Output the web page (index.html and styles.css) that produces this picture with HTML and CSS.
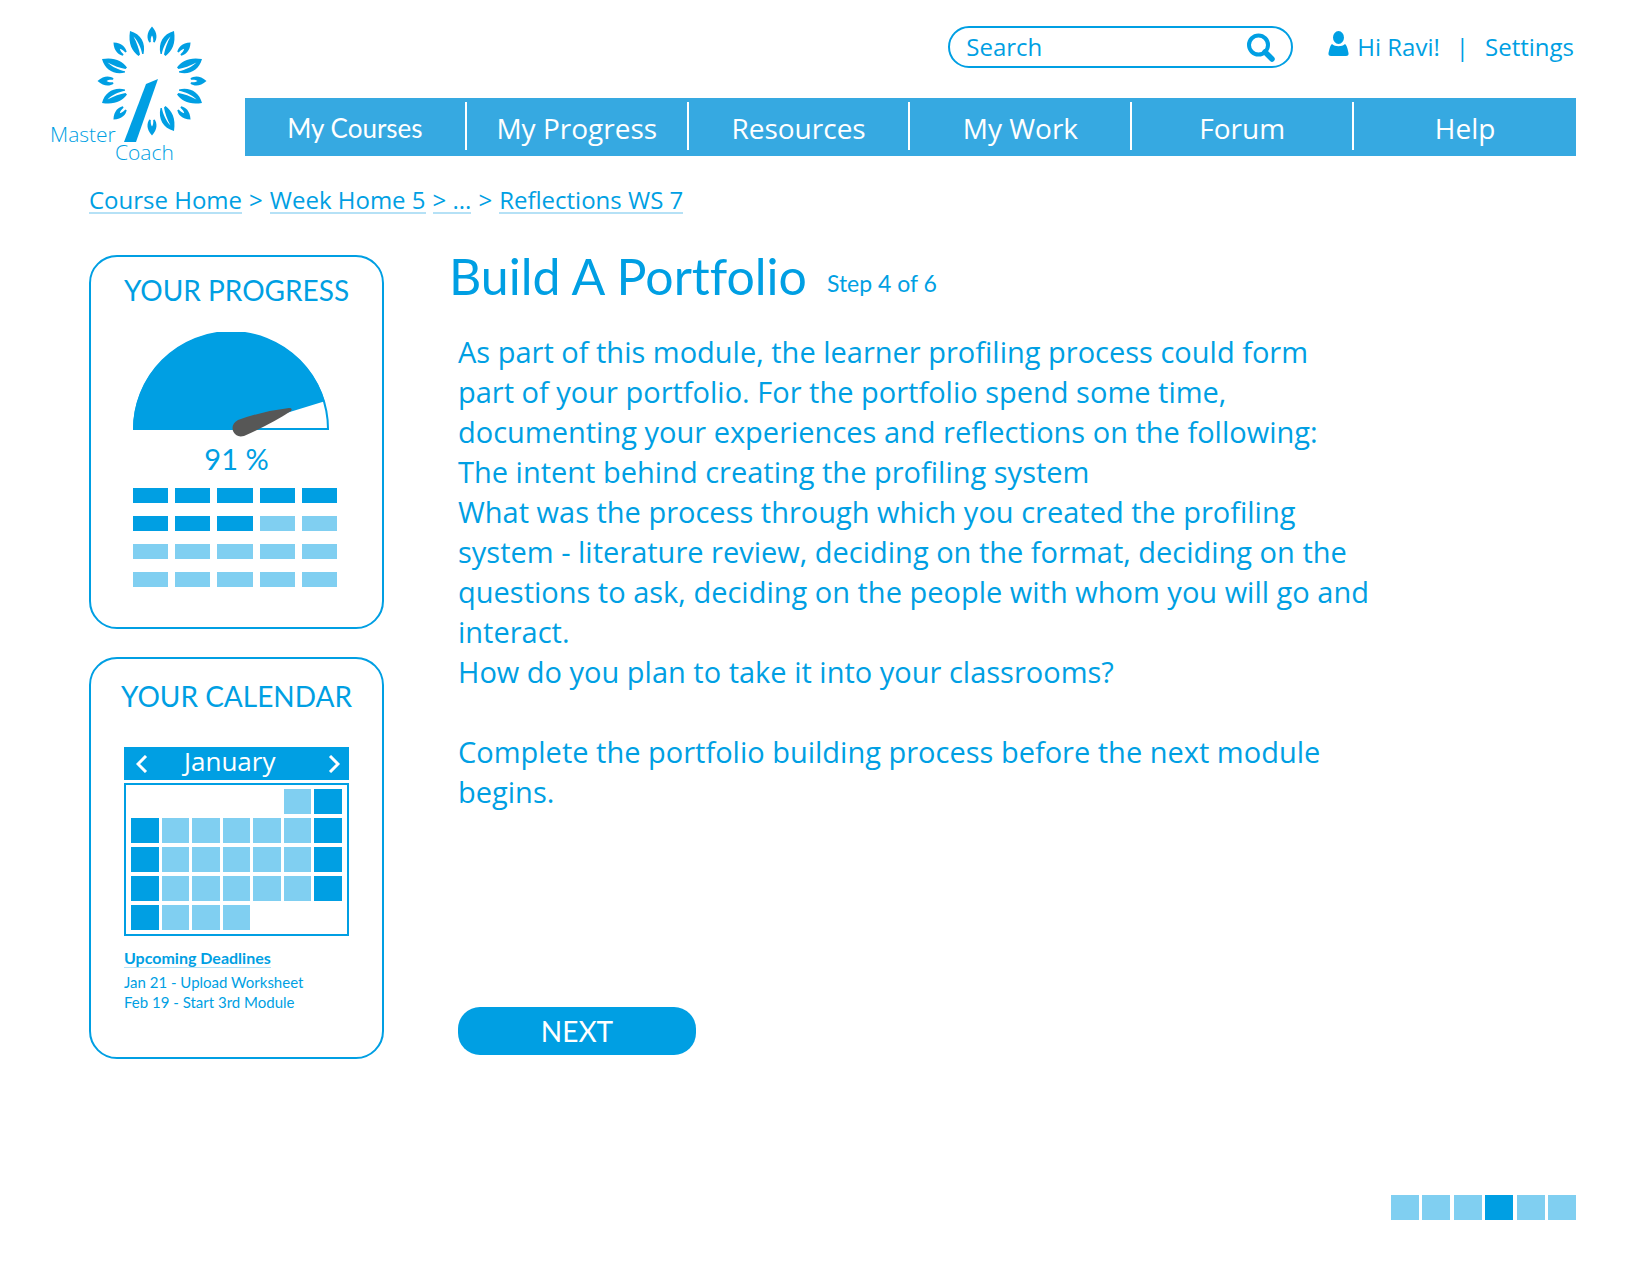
FILE: index.html
```html
<!DOCTYPE html>
<html lang="en">
<head>
<meta charset="utf-8">
<title>Master Coach - Build A Portfolio</title>
<link rel="stylesheet" href="styles.css">
</head>
<body>
<div class="page">
  <header class="header">
    <a class="logo" href="#" aria-label="Master Coach">
      <svg width="164" height="146" viewBox="8 8 164 146">
        <defs>
          <path id="leaf" d="M22-50C11-47 6-38 8.500-27L9.800-27C11-33 14-40 18.500-44.500C15-38 13-32 12-26.500L13.500-25C20-30 24-37 22-50Z"/>
          <path id="bud" d="M0-54.500C-6-48-5-42-2.700-38.500L-1.200-39C-1.500-42-1-44 0-45.500C1-44 1.500-42 1.200-39L2.700-38.500C5-42 6-48 0-54.500Z"/>
        </defs>
        <g transform="translate(112 66)">
          <use href="#leaf"/>
          <use href="#leaf" transform="scale(-1 1)"/>
          <use href="#leaf" transform="scale(1 -1)"/>
          <use href="#leaf" transform="matrix(0 -1 -1 0 0 0)"/>
          <use href="#leaf" transform="matrix(0 1 -1 0 0 0)"/>
          <use href="#leaf" transform="matrix(0 -1 1 0 0 0)"/>
          <use href="#leaf" transform="matrix(0 1 1 0 0 0)"/>
          <use href="#bud"/>
          <use href="#bud" transform="rotate(45)"/>
          <use href="#bud" transform="rotate(90)"/>
          <use href="#bud" transform="rotate(135)"/>
          <use href="#bud" transform="rotate(180)"/>
          <use href="#bud" transform="rotate(225)"/>
          <use href="#bud" transform="rotate(270)"/>
          <use href="#bud" transform="rotate(315)"/>
        </g>
        <path d="M106 69L118 64L96 127H84Z"/>
        <text class="logo-text" x="10" y="127">Master</text>
        <text class="logo-text" x="75" y="145">Coach</text>
      </svg>
    </a>
    <div class="header-main">
      <div class="tools">
        <form class="search" role="search">
          <input class="search-input" type="search" placeholder="Search" aria-label="Search">
          <button class="search-button" type="button" aria-label="Search">
            <svg width="28" height="29" viewBox="0 0 28 29"><circle cx="11.500" cy="12" r="9.500" fill="none" stroke="currentColor" stroke-width="4"/><path d="M18 19L25 26" fill="none" stroke="currentColor" stroke-width="5.500" stroke-linecap="round"/></svg>
          </button>
        </form>
        <div class="account">
          <a class="user" href="#"><svg width="21" height="25" viewBox="0 0 21 25"><ellipse cx="10.500" cy="6.500" rx="5.500" ry="6.500"/><path d="M4 13C7 16 14 16 17 13Q19 14 20.500 22Q21 25 18 25H3Q0 25 .5 22Q2 14 4 13Z"/></svg>Hi Ravi!</a>
          <span>|</span>
          <a href="#">Settings</a>
        </div>
      </div>
      <nav class="nav" aria-label="Main">
        <a class="compact" href="#">My Courses</a>
        <a href="#">My Progress</a>
        <a href="#">Resources</a>
        <a href="#">My Work</a>
        <a href="#">Forum</a>
        <a href="#">Help</a>
      </nav>
    </div>
  </header>

  <nav class="crumbs" aria-label="Breadcrumb">
    <a href="#">Course Home</a><span>&gt;</span><a href="#">Week Home 5</a><a href="#">&gt; ...</a><span>&gt;</span><a href="#">Reflections WS 7</a>
  </nav>

  <div class="columns">
    <aside class="side">
      <section class="card progress">
        <h2>YOUR PROGRESS</h2>
        <svg class="gauge" width="197" height="106" viewBox="0 0 197 106" role="img" aria-label="91 percent">
          <path d="M1 97A97 97 0 0 1 195 97Z" fill="#fff" stroke="#009fe3" stroke-width="2"/>
          <path d="M0 98A98 98 0 0 1 191.700 69.200L98 98Z" fill="#009fe3"/>
          <path d="M105 88Q130 79 156 76Q160 76 158 79Q140 91 111 104Q103 106 100 99Q98 92 105 88Z" fill="#575756"/>
        </svg>
        <p class="percent">91 %</p>
        <div class="bars">
          <i class="on"></i><i class="on"></i><i class="on"></i><i class="on"></i><i class="on"></i>
          <i class="on"></i><i class="on"></i><i class="on"></i><i></i><i></i>
          <i></i><i></i><i></i><i></i><i></i>
          <i></i><i></i><i></i><i></i><i></i>
        </div>
      </section>

      <section class="card calendar">
        <h2>YOUR CALENDAR</h2>
        <div class="month">
          <button type="button" aria-label="Previous month"><svg width="12" height="18" viewBox="0 0 12 18"><path d="M10 1L2 9L10 17"/></svg></button>
          <span>January</span>
          <button type="button" aria-label="Next month"><svg width="12" height="18" viewBox="0 0 12 18"><path d="M2 1L10 9L2 17"/></svg></button>
        </div>
        <div class="days">
          <i class="first"></i><i class="on"></i>
          <i class="on"></i><i></i><i></i><i></i><i></i><i></i><i class="on"></i>
          <i class="on"></i><i></i><i></i><i></i><i></i><i></i><i class="on"></i>
          <i class="on"></i><i></i><i></i><i></i><i></i><i></i><i class="on"></i>
          <i class="on"></i><i></i><i></i><i></i>
        </div>
        <h3><a href="#">Upcoming Deadlines</a></h3>
        <ul>
          <li>Jan 21 - Upload Worksheet</li>
          <li>Feb 19 - Start 3rd Module</li>
        </ul>
      </section>
    </aside>

    <main class="main">
      <div class="heading">
        <h1>Build A Portfolio</h1>
        <span class="step">Step 4 of 6</span>
      </div>
      <div class="copy">
        <p>As part of this module, the learner profiling process could form<br>
        part of your portfolio. For the portfolio spend some time,<br>
        documenting your experiences and reflections on the following:<br>
        The intent behind creating the profiling system<br>
        What was the process through which you created the profiling<br>
        system - literature review, deciding on the format, deciding on the<br>
        questions to ask, deciding on the people with whom you will go and<br>
        interact.<br>
        How do you plan to take it into your classrooms?</p>
        <p>Complete the portfolio building process before the next module<br>
        begins.</p>
      </div>
      <button class="next" type="button">NEXT</button>
    </main>
  </div>

  <div class="steps" role="img" aria-label="Step 4 of 6">
    <i></i><i></i><i></i><i class="on"></i><i></i><i></i>
  </div>
</div>
</body>
</html>
```
FILE: styles.css
```css
:root {
  --blue: #009fe3;
  --light: #80cff1;
  --nav: #36a9e1;
  --line: #b5e1f6;
  --wide: "Open Sans", sans-serif;
  --text: Lato, sans-serif;
}
* { box-sizing: border-box; }
body {
  margin: 0;
  background: #fff;
  color: var(--blue);
  font: 28px/40px var(--text);
  font-variant-ligatures: none;
}
h1, h2, h3, p, ul { margin: 0; padding: 0; font-weight: 400; }
a { color: inherit; text-decoration: none; }
button {
  padding: 0;
  border: 0;
  background: none;
  color: inherit;
  font: inherit;
  cursor: pointer;
}
svg { display: block; fill: currentColor; flex: none; }

.page { padding: 23px 74px 56px 48px; }

.header { display: flex; gap: 33px; }
.logo-text { font: 300 21px var(--wide); }
.header-main { flex: 1; padding-top: 3px; }
.tools {
  display: flex;
  justify-content: flex-end;
  align-items: center;
  gap: 35px;
  padding-right: 2px;
  font: 24px/32px var(--wide);
}
.search {
  display: flex;
  align-items: center;
  width: 345px;
  height: 42px;
  padding: 0 16px;
  border: 2px solid var(--blue);
  border-radius: 21px;
}
.search-input {
  flex: 1;
  min-width: 0;
  height: 36px;
  padding: 0 0 2px;
  border: 0;
  outline: 0;
  background: none;
  color: inherit;
  font: inherit;
}
.search-input::placeholder { color: var(--blue); opacity: 1; }
.account { display: flex; gap: 16px; }
.user { display: flex; gap: 8px; }

.nav {
  display: grid;
  grid-template-columns: repeat(6, 1fr);
  height: 58px;
  margin-top: 30px;
  padding: 4px 0 6px;
  background: var(--nav);
  color: #fff;
  font: 28px/52px var(--wide);
  text-align: center;
}
.nav a { height: 48px; border-right: 2px solid #fff; }
.nav a:last-child { border: 0; }
.nav .compact { font-family: var(--text); font-size: 26px; }

.crumbs {
  display: flex;
  gap: 7px;
  margin: 19px 0 0 41px;
  font: 24px/24px var(--wide);
}
.crumbs a { border-bottom: 2px solid var(--line); }

.columns { display: flex; gap: 65px; margin: 41px 0 0 41px; }
.side { width: 295px; flex: none; }
.card {
  padding: 0 33px;
  border: 2px solid var(--blue);
  border-radius: 28px;
}
.card h2 { margin: 0 -20px; font-size: 28px; line-height: 36px; text-align: center; }
.progress { height: 374px; padding-top: 15px; }
.gauge { margin: 24px 0 0 9px; }
.percent { margin-top: 1px; font-size: 29px; text-align: center; }
.bars {
  display: grid;
  grid-template-columns: repeat(5, 1fr);
  gap: 13px 7px;
  width: 204px;
  margin: 9px 0 0 9px;
}
.bars i { height: 15px; background: var(--light); }
.calendar { height: 402px; margin-top: 28px; padding-top: 19px; }
.month {
  display: grid;
  grid-template-columns: 48px 1fr 12px;
  align-items: center;
  height: 33px;
  margin-top: 33px;
  padding: 0 9px 0 12px;
  background: var(--blue);
  color: #fff;
  font: 26px/28px var(--wide);
}
.month span { align-self: start; }
.month path { fill: none; stroke: #fff; stroke-width: 3; }
.days {
  display: grid;
  grid-template-columns: repeat(7, 1fr);
  gap: 4px 3px;
  margin-top: 3px;
  padding: 4px 5px;
  border: 2px solid var(--blue);
}
.days i, .steps i { height: 25px; background: var(--light); }
.days .first { grid-column: 6; }
.bars .on, .days .on, .steps .on { background: var(--blue); }
.calendar h3 { margin-top: 13px; font: 700 16px/18px var(--text); }
.calendar h3 a { border-bottom: 1px solid var(--line); }
.calendar ul { margin-top: 5px; list-style: none; font-size: 15px; line-height: 20px; }

.main { flex: 1; }
.heading { display: flex; align-items: flex-end; gap: 20px; }
.heading h1 { font-size: 50px; line-height: 42px; }
.step { font-size: 23px; line-height: 28px; }
.copy { padding: 35px 0 0 9px; font: 29px/40px var(--wide); }
.copy p + p { margin-top: 40px; }
.next {
  display: block;
  width: 238px;
  height: 48px;
  margin: 195px 0 0 9px;
  border-radius: 22px;
  background: var(--blue);
  color: #fff;
}
.steps {
  display: flex;
  justify-content: space-between;
  width: 185px;
  margin: 136px 0 0 auto;
}
.steps i { width: 28px; }
```
